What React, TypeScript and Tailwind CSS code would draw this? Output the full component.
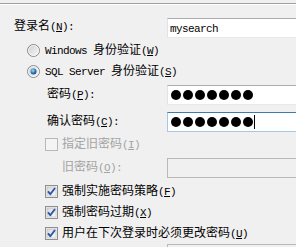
import React from "react";

const cjk = "font-['Noto_Sans_CJK_SC','Microsoft_YaHei',sans-serif]";

// latin bits (SimSun-ish monospace half-width)
function M({ children }: { children: React.ReactNode }) {
  return (
    <span className="font-['Liberation_Mono','DejaVu_Sans_Mono',monospace] text-[11px] tracking-[-0.6px]">
      {children}
    </span>
  );
}

function Key({ k }: { k: string }) {
  return (
    <M>
      (<span className="underline underline-offset-[1px]">{k}</span>)
    </M>
  );
}

function Radio({ checked, id }: { checked?: boolean; id: string }) {
  return (
    <svg width="13" height="13" viewBox="0 0 13 13" className="shrink-0">
      <defs>
        <linearGradient id={`rf-${id}`} x1="0" y1="0" x2="1" y2="1">
          <stop offset="0" stopColor="#cbcbcb" />
          <stop offset="1" stopColor="#fbfbfb" />
        </linearGradient>
        <radialGradient id={`rd-${id}`} cx="0.4" cy="0.35" r="0.7">
          <stop offset="0" stopColor="#a6dcf8" />
          <stop offset="0.55" stopColor="#2f7fc0" />
          <stop offset="1" stopColor="#163f6e" />
        </radialGradient>
      </defs>
      <circle cx="6.5" cy="6.5" r="6" fill={`url(#rf-${id})`} stroke="#8a8a8a" strokeWidth="1" />
      <circle cx="6.5" cy="6.5" r="5" fill="none" stroke="#f6f6f6" strokeWidth="0.8" />
      {checked && <circle cx="6.5" cy="6.5" r="3" fill={`url(#rd-${id})`} />}
    </svg>
  );
}

function Check({ checked, disabled }: { checked?: boolean; disabled?: boolean }) {
  return (
    <svg width="13" height="13" viewBox="0 0 13 13" className="shrink-0">
      <defs>
        <linearGradient id="cf" x1="0" y1="0" x2="1" y2="1">
          <stop offset="0" stopColor="#d8d8d8" />
          <stop offset="1" stopColor="#fafafa" />
        </linearGradient>
      </defs>
      <rect x="0.5" y="0.5" width="12" height="12" fill="#f4f4f4" stroke={disabled ? "#b8b8b8" : "#8e8f8f"} />
      {!disabled && <rect x="2" y="2" width="9" height="9" fill="url(#cf)" stroke="#b4b7bb" strokeWidth="0.6" />}
      {disabled && <rect x="2" y="2" width="9" height="9" fill="#f4f4f4" />}
      {checked && (
        <path d="M3 6.3 L5.3 9.2 L10 3" fill="none" stroke="#2d56a8" strokeWidth="1.9" strokeLinejoin="round" />
      )}
    </svg>
  );
}

function Box({ children, focus, disabled }: { children?: React.ReactNode; focus?: boolean; disabled?: boolean }) {
  const border = focus
    ? "border border-[#a6c8e6] border-t-[#3d7bad]"
    : disabled
    ? "border border-[#b8b8b8]"
    : "border border-[#e3e9ef] border-t-[#abadb3] border-l-[#e2e3ea]";
  return (
    <div
      className={`ml-auto w-[140px] h-[20px] shrink-0 flex items-center pl-[2px] ${border} ${
        disabled ? "bg-[#f0f0f0]" : "bg-white"
      }`}
    >
      {children}
    </div>
  );
}

function Dots({ caret }: { caret?: boolean }) {
  return (
    <div className="flex items-center gap-[2px] pl-[1px]">
      {[0, 1, 2, 3, 4, 5, 6].map((i) => (
        <div key={i} className="w-[10px] h-[10px] rounded-full bg-black" />
      ))}
      {caret && <div className="w-px h-[14px] bg-black -ml-[1px]" />}
    </div>
  );
}

export default function App() {
  return (
    <div className={`w-[296px] h-[247px] overflow-hidden bg-[#f0f0f0] text-[12px] text-black ${cjk}`}>
      <div className="h-px mt-[3px] bg-[#a0a0a0]" />
      <div className="h-px bg-white" />

      {/* login name */}
      <div className="flex items-center h-[20px] mt-[13px] pl-[14px] pr-0 mr-[-11px]">
        <span className="leading-[14px] mb-[4px]">
          登录名<Key k="N" />
          <M>:</M>
        </span>
        <Box>
          <span className="leading-[14px] mt-[-1px]">
            <M>mysearch</M>
          </span>
        </Box>
      </div>

      {/* auth mode */}
      <div className="flex items-center gap-[5px] h-[16px] mt-[4px] pl-[27px]">
        <Radio id="w" />
        <span className="leading-[14px]">
          <M>Windows </M>身份验证<Key k="W" />
        </span>
      </div>
      <div className="flex items-center gap-[5px] h-[16px] mt-[5px] pl-[27px]">
        <Radio id="s" checked />
        <span className="leading-[14px]">
          <M>SQL Server </M>身份验证<Key k="S" />
        </span>
      </div>

      {/* passwords */}
      <div className="flex items-center h-[20px] mt-[6px] pl-[47px] mr-[-11px]">
        <span className="leading-[14px] mb-[2px]">
          密码<Key k="P" />
          <M>:</M>
        </span>
        <Box>
          <Dots />
        </Box>
      </div>
      <div className="flex items-center h-[20px] mt-[7px] pl-[47px] mr-[-11px]">
        <span className="leading-[14px] mb-[2px]">
          确认密码<Key k="C" />
          <M>:</M>
        </span>
        <Box focus>
          <Dots caret />
        </Box>
      </div>

      {/* old password (disabled) */}
      <div className="flex items-center gap-[4px] h-[16px] mt-[4px] pl-[45px] text-[#a3a3a3]">
        <Check disabled />
        <span className="leading-[14px]">
          指定旧密码<Key k="I" />
        </span>
      </div>
      <div className="flex items-center h-[20px] mt-[6px] pl-[62px] mr-[-11px] text-[#a3a3a3]">
        <span className="leading-[14px] mb-[2px]">
          旧密码<Key k="O" />
          <M>:</M>
        </span>
        <Box disabled />
      </div>

      {/* policy */}
      <div className="flex items-center gap-[4px] h-[16px] mt-[5px] pl-[45px]">
        <Check checked />
        <span className="leading-[14px]">
          强制实施密码策略<Key k="F" />
        </span>
      </div>
      <div className="flex items-center gap-[4px] h-[16px] mt-[5px] pl-[45px]">
        <Check checked />
        <span className="leading-[14px]">
          强制密码过期<Key k="X" />
        </span>
      </div>
      <div className="flex items-center gap-[4px] h-[16px] mt-[5px] pl-[45px]">
        <Check checked />
        <span className="leading-[14px]">
          用户在下次登录时必须更改密码<Key k="U" />
        </span>
      </div>

      {/* next row, cut off at the bottom */}
      <div className="flex items-center h-[20px] mt-[3px] pl-[27px] mr-[-11px]">
        <Radio id="c" />
        <Box disabled />
      </div>
    </div>
  );
}
